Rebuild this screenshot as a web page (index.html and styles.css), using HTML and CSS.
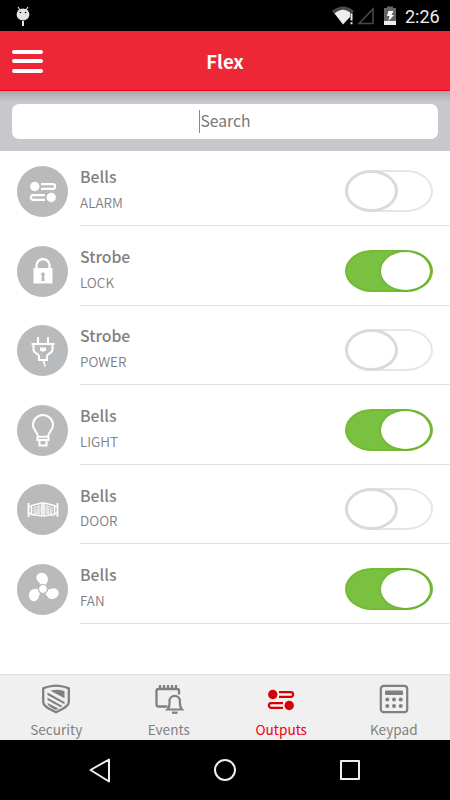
FILE: index.html
```html
<!DOCTYPE html>
<html lang="en">
<head>
<meta charset="utf-8">
<title>Flex</title>
<link rel="stylesheet" href="styles.css">
</head>
<body>
<svg width="0" height="0" class="defs">
  <symbol id="outputs" viewBox="0 0 28 22">
    <circle cx="5.800" cy="5.500" r="4.700" fill="currentColor"/>
    <circle cx="22.200" cy="16.500" r="4.700" fill="currentColor"/>
    <path d="M12 3.200h11.800a2.300 2.300 0 0 1 0 4.600H12M16 18.800H4.200a2.300 2.300 0 0 1 0-4.600H16" fill="none" stroke="currentColor" stroke-width="2.200"/>
  </symbol>
</svg>
<div class="status">
  <svg width="14" height="21" viewBox="0 0 14 21" fill="#e4e4e4"><path d="M2 1l2 3M12 1l-2 3" stroke="#e4e4e4" stroke-width="1.200"/><ellipse cx="7" cy="8.500" rx="6.400" ry="6"/><path d="M6 15h2v5H6z"/><circle cx="4.400" cy="6.500" r=".8" fill="#000"/><circle cx="9.600" cy="6.500" r=".8" fill="#000"/></svg>
  <svg class="signals" width="66" height="20" viewBox="0 0 66 20">
    <path d="M0 5Q11-4 22 5L19 8.500Q11 2 3 8.500z" fill="#4a4a4a"/>
    <path d="M2.500 7.500Q11 .5 18 6.500V11l-7 7.500z" fill="#eee"/>
    <path d="M18.500 7.500h2v7h-2zM18.500 16.300h2v2h-2z" fill="#eee"/>
    <path d="M27 17.500h14V3z" fill="none" stroke="#484848" stroke-width="1.600"/>
    <path d="M52 2h3V.5h6V2h3v17H52z" fill="#666"/>
    <path d="M52 15h12v4H52z" fill="#eee"/>
    <path d="M56.500 5h5L59.500 9H62l-5.500 6 1-5H55z" fill="#fff"/>
  </svg>
  <span class="clock">2:26</span>
</div>
<header class="bar">
  <div class="menu"><i></i><i></i><i></i></div>
  <h1>Flex</h1>
</header>
<div class="search"><div class="field"><span class="caret"></span><span class="hint">Search</span></div></div>
<main class="list">
  <div class="row">
    <div class="disc"><svg width="28" height="22"><use href="#outputs"/></svg></div>
    <div class="text"><b>Bells</b><span>ALARM</span></div><div class="switch"><i></i></div>
  </div>
  <div class="row">
    <div class="disc"><svg width="20" height="26" viewBox="0 0 20 26"><path d="M3.500 11V7.500a6.500 6.500 0 0 1 13 0V11" fill="none" stroke="#fff" stroke-width="2.300"/><path d="M.5 10h19v15.500H.5z" fill="#fff"/><path d="M10 14.300a2 2 0 0 1 1 3.700l.8 5H8.200L9 18a2 2 0 0 1 1-3.700z" fill="#b9babc"/></svg></div>
    <div class="text"><b>Strobe</b><span>LOCK</span></div><div class="switch on"><i></i></div>
  </div>
  <div class="row">
    <div class="disc"><svg width="24" height="32" viewBox="0 0 24 32" fill="none" stroke="#fff" stroke-width="2.100"><path d="M7 2v7M17 2v7M.5 9h23M2.500 9v5.500c0 4 4.500 3.500 5.500 6.500v4h8v-4c1-3 5.500-2.500 5.500-6.500V9"/><path d="M11.500 26c3 0 .5 3 3 5.500" stroke-width="1.600"/><path d="M9 12.500h6v3.500H13L11 17.500V16H9z" fill="#fff" stroke="none"/></svg></div>
    <div class="text"><b>Strobe</b><span>POWER</span></div><div class="switch"><i></i></div>
  </div>
  <div class="row">
    <div class="disc"><svg width="24" height="33" viewBox="0 0 24 33" fill="none" stroke="#fff" stroke-width="2.100"><path d="M7 22.800c0-4.800-5-6.300-5-11.800a10 10 0 0 1 20 0c0 5.500-5 7-5 11.800z"/><path d="M6.500 22.500V26h11v-3.500M8.500 26v5.500h7V26"/></svg></div>
    <div class="text"><b>Bells</b><span>LIGHT</span></div><div class="switch on"><i></i></div>
  </div>
  <div class="row">
    <div class="disc"><svg width="32" height="16" viewBox="0 0 32 16" fill="none" stroke="#fff"><path d="M1.500 1v14M30.500 1v14" stroke-width="1.800"/><path d="M2 4.500h2M2 11.500h2M28 4.500h2M28 11.500h2" stroke-width="1.400"/><path d="M4.500 3.500L15 1v13L4.500 12.500zM27.500 3.500L17 1v13l10.500-1.500z" stroke-width="1.500"/><path d="M7 5.500l6-1.800v7.800H7zM25 5.500l-6-1.800v7.800h6z" stroke-width=".8"/><path d="M8.700 6.500v4.500M10.200 5.500V11M11.700 5v6M20.300 5v6M21.800 5.500V11M23.300 6.500v4.500" stroke-width=".8"/></svg></div>
    <div class="text"><b>Bells</b><span>DOOR</span></div><div class="switch"><i></i></div>
  </div>
  <div class="row">
    <div class="disc"><svg width="34" height="34" viewBox="-17 -17 34 34"><g fill="#fff"><path id="blade" d="M-2-4C-3-7-7.500-8-6.500-12.500-5.500-17.500 1.500-17.500 4-13 6.500-8.500 3.500-7 3-4z"/><use href="#blade" transform="rotate(120)"/><use href="#blade" transform="rotate(240)"/></g><circle r="4.600" fill="#fff" stroke="#b9babc" stroke-width="1.300"/></svg></div>
    <div class="text"><b>Bells</b><span>FAN</span></div><div class="switch on"><i></i></div>
  </div>
</main>
<nav class="tabs">
  <div class="tab"><svg width="30" height="30" viewBox="0 0 30 30"><path d="M15 1.700c5 0 8.500 1.200 12.800 2.600V18c0 5-7.800 7.500-12.800 10.300C10 25.500 2.200 23 2.200 18V4.300C6.500 2.900 10 1.700 15 1.700z" fill="none" stroke="currentColor" stroke-width="2.300"/><path d="M9.500 6.700c5-1.500 10-1 14 .6v6.900zM6.500 8.500l17 9.500v2.300L6.500 11zM6.500 13.700l15 8.300-2 1.300L6.500 16zM6.500 19l11 5.500-2.500 1.400c-4-2-8.500-3.800-8.500-6.900z" fill="currentColor"/></svg><span>Security</span></div>
  <div class="tab"><svg width="30" height="30" viewBox="0 0 30 30" fill="none" stroke="currentColor" stroke-width="2.300"><path d="M13.500 22.500H4.500q-2 0-2-2V7q0-2 2-2h18.500q2 0 2 2v3.500M6 1v4M10 1v4M14 1v4M18 1v4M22 1v4"/><path d="M13.500 25.500c2.500-2.500 2-5 2-8.500a5.200 5.200 0 0 1 10.400 0c0 3.500-.4 6 2.100 8.500z" stroke-width="2.200"/><path d="M18 28.700h5.500"/></svg><span>Events</span></div>
  <div class="tab active"><svg width="28" height="22"><use href="#outputs"/></svg><span>Outputs</span></div>
  <div class="tab"><svg width="30" height="30" viewBox="0 0 30 30" fill="currentColor"><rect x="1.800" y="1.800" width="26.400" height="26.400" rx="3" fill="none" stroke="currentColor" stroke-width="2.200"/><rect x="6" y="6.500" width="18" height="4.500" rx="1"/><circle cx="8.300" cy="15.500" r="2"/><circle cx="15" cy="15.500" r="2"/><circle cx="21.700" cy="15.500" r="2"/><circle cx="8.300" cy="22" r="2"/><circle cx="15" cy="22" r="2"/><circle cx="21.700" cy="22" r="2"/></svg><span>Keypad</span></div>
</nav>
<footer class="system">
  <svg width="450" height="60" viewBox="0 0 450 60" fill="none" stroke="#eee" stroke-width="2" stroke-linejoin="round"><path d="M109 19.500v22L90.500 30z"/><circle cx="225" cy="30" r="10"/><path d="M341 21h18v18h-18z"/></svg>
</footer>
</body>
</html>
```
FILE: styles.css
```css
* { box-sizing: border-box; }
body {
  margin: 0;
  width: 450px;
  height: 800px;
  display: flex;
  flex-direction: column;
  overflow: hidden;
  background: #fff;
  font-family: "Noto Sans CJK SC", sans-serif;
}
.defs { position: absolute; }
.status {
  height: 31px;
  flex: none;
  display: flex;
  background: #000;
  padding: 6px 10px 0 15.500px;
}
.signals { margin-left: auto; }
.clock {
  font: 400 18px/21px Roboto, sans-serif;
  color: #eee;
  margin-left: 7px;
  width: 35px;
  white-space: nowrap;
}
.bar {
  height: 60px;
  flex: none;
  display: grid;
  grid-template-columns: 50px 1fr 50px;
  align-items: center;
  background: #ee2737;
  border-bottom: 1px solid #f5001a;
}
.menu {
  display: flex;
  flex-direction: column;
  gap: 5.500px;
  padding: 1px 0 0 12px;
}
.menu i {
  width: 31px;
  height: 4px;
  border-radius: 2px;
  background: #fff;
}
.bar h1 {
  margin: 0;
  text-align: center;
  color: #fff;
  font-size: 18.500px;
  line-height: 28px;
  font-weight: 700;
}
.search {
  height: 60px;
  flex: none;
  padding: 13px 12px 12px;
  background: linear-gradient(#a9a8ad, #c8c7cc 11px);
}
.field {
  height: 35px;
  border-radius: 7px;
  background: #fff;
  display: flex;
  align-items: center;
  justify-content: center;
  font-size: 15.700px;
  color: #777;
}
.hint { padding-bottom: 3px; }
.caret {
  width: 1px;
  height: 23px;
  background: #888;
}
.list { height: 523px; flex: none; }
.row {
  height: 79.600px;
  display: flex;
  align-items: flex-start;
  padding: 19.500px 0 0 17px;
}
.row:first-child { height: 75px; padding-top: 15px; }
.disc {
  width: 51px;
  height: 51px;
  flex: none;
  border-radius: 50%;
  background: #b9babc;
  color: #fff;
  display: flex;
  align-items: center;
  justify-content: center;
}
.text {
  align-self: stretch;
  margin-left: 12px;
  flex: 1;
  display: flex;
  flex-direction: column;
  border-bottom: 1px solid #e0e0e0;
  margin-right: -105px;
  color: #808184;
}
.text b {
  font-size: 15.800px;
  line-height: 24px;
  font-weight: 500;
  margin-top: -.7px;
}
.text span {
  font-size: 13.500px;
  line-height: 26px;
  margin-top: -.3px;
  font-weight: 350;
}
.switch {
  width: 88px;
  height: 42px;
  margin: 4px 17px 0 auto;
  flex: none;
  border-radius: 27px / 21px;
  border: 2px solid #e5e6e7;
  background: #fff;
}
.switch i {
  display: block;
  width: 53px;
  height: 42px;
  margin: -2px;
  border-radius: 50%;
  border: 3px solid #d8dadb;
  background: #fff;
}
.switch.on { background: #7ac142; border-color: #74bb33; }
.switch.on i {
  width: 49px;
  height: 38px;
  margin: 0 0 0 34px;
  border: 0;
  box-shadow: 0 0 3px #5b9f1c;
}
.tabs {
  height: 66px;
  flex: none;
  display: grid;
  grid-template-columns: repeat(4, 1fr);
  background: #f0f0f0;
  border-top: 1px solid #dcdcdc;
}
.tab {
  display: flex;
  flex-direction: column;
  align-items: center;
  justify-content: flex-end;
  padding-bottom: 1px;
  color: #808080;
}
.tab svg { margin-bottom: 5px; }
.tab span {
  font-size: 13.600px;
  line-height: 20px;
}
.tab.active { color: #d50006; }
.tab.active svg { margin-bottom: 8px; }
.tab.active span { color: #f00010; }
.system { height: 60px; flex: none; background: #000; }
.system svg { display: block; }
```
